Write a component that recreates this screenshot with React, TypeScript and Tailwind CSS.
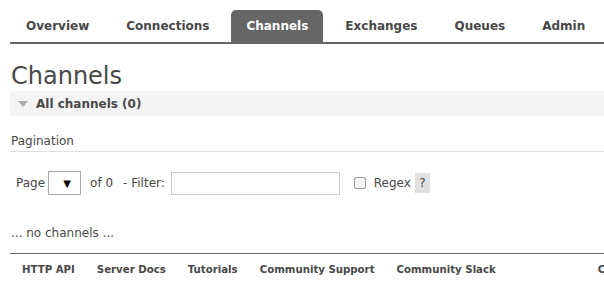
import React from 'react';

const tabs = ['Overview', 'Connections', 'Channels', 'Exchanges', 'Queues', 'Admin'];
const footerLinks = ['HTTP API', 'Server Docs', 'Tutorials', 'Community Support', 'Community Slack'];

const App: React.FC = () => {
  const active = 'Channels';

  return (
    <div className="w-[604px] h-[282px] overflow-hidden bg-white text-[#484848] font-['DejaVu_Sans',Verdana,sans-serif] text-[12px]">
      <div className="w-[900px] pl-[10px]">
        {/* Tabs */}
        <ul className="flex gap-[7px] pt-[10px] pl-[1px] border-b-2 border-[#666]">
          {tabs.map((tab) => (
            <li
              key={tab}
              className={
                tab === active
                  ? 'h-[32px] px-[15px] flex items-center font-bold bg-[#666] text-white rounded-t-[5px]'
                  : 'h-[32px] px-[15px] flex items-center font-bold text-[#484848]'
              }
            >
              {tab}
            </li>
          ))}
        </ul>

        {/* Heading */}
        <h1 className="mt-[18px] text-[24px] leading-[29px] pl-[1px]">Channels</h1>

        {/* Section */}
        <div className="h-[25px] bg-[#f4f4f4] flex items-center pl-[8px] gap-[8px] font-bold">
          <svg width="10" height="6" viewBox="0 0 10 6">
            <polygon points="0,0 10,0 5,6" fill="#aaa" />
          </svg>
          <span>All channels (0)</span>
        </div>

        <div className="mt-[17px] pl-[1px] pb-[2px] border-b border-[#ddd] leading-[16px]">Pagination</div>

        {/* Pagination row */}
        <div className="mt-[19px] flex items-center pl-[6px] h-[24px]">
          <span>Page</span>
          <div className="ml-[3px] w-[33px] h-[24px] border border-[#aaa] flex items-center justify-end pr-[9px] text-[10px] text-black">▼</div>
          <span className="ml-[9px]">of 0</span>
          <span className="ml-[10px]">- Filter:</span>
          <div className="ml-[6px] w-[169px] h-[23px] border border-[#ccc]"></div>
          <div className="ml-[14px] w-[12px] h-[12px] border border-[#999] rounded-[2px] bg-[#f4f4f4]"></div>
          <span className="ml-[8px]">Regex</span>
          <span className="ml-[4px] w-[15px] h-[20px] bg-[#e0e0e0] flex items-center justify-center">?</span>
        </div>

        <p className="mt-[30px] pl-[1px] leading-[16px]">... no channels ...</p>

        {/* Footer */}
        <div className="mt-[12px] border-t border-[#666] flex pl-[1px] whitespace-nowrap text-[10.2px] font-bold">
          {footerLinks.map((link) => (
            <span key={link} className="px-[11px] h-[32px] flex items-center">
              {link}
            </span>
          ))}
          <span className="ml-[80px] px-[11px] h-[32px] flex items-center">Commercial Support</span>
        </div>
      </div>
    </div>
  );
};

export default App;
